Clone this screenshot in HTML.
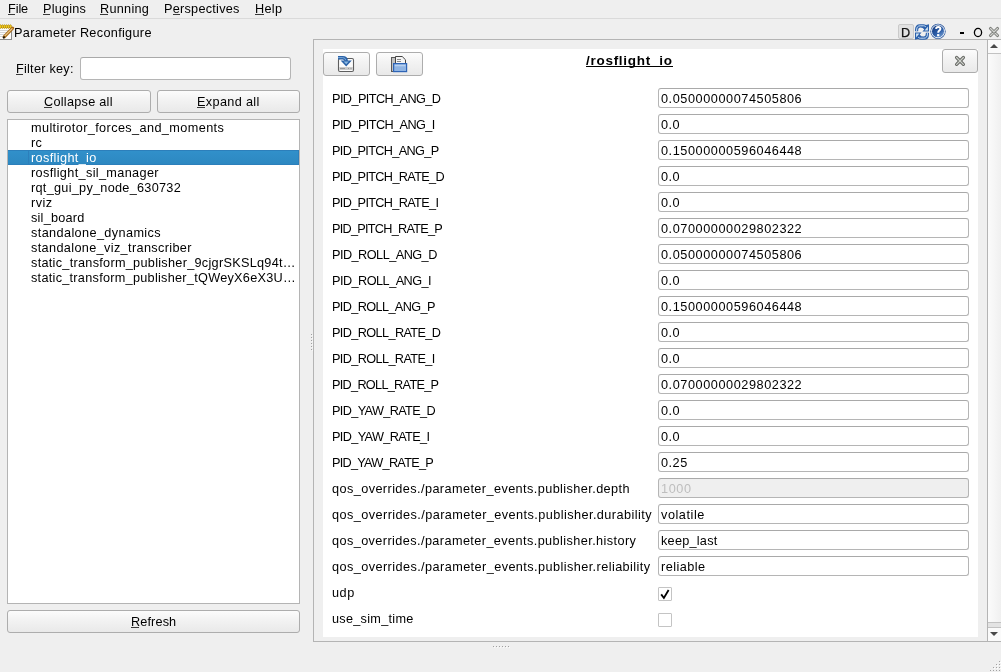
<!DOCTYPE html><html><head><meta charset="utf-8"><style>
*{box-sizing:border-box}
html,body{margin:0;padding:0}
body{width:1001px;height:672px;overflow:hidden;background:#efefef;position:relative;font-family:"Liberation Sans",sans-serif;font-size:12.7px}
.t{position:absolute;line-height:16px;white-space:pre}
.a{position:absolute}
u{text-decoration:none;border-bottom:1px solid currentColor;display:inline-block;line-height:12px}
.btn{position:absolute;border:1px solid #adadad;border-radius:3px;background:linear-gradient(#fcfcfc,#f3f3f3 40%,#e9e9e9)}
.inp{position:absolute;border:1px solid #b5b5b5;border-top-color:#a9a9a9;border-radius:3px;background:#fff}
</style></head><body><div id="root" class="a" style="left:0;top:0;width:1001px;height:672px;will-change:transform;background:#efefef">
<div class="a" style="left:0;top:18px;width:1001px;height:1px;background:#dadada"></div>
<div class="t" style="left:8px;top:1px;letter-spacing:-0.096px;color:#000;font-size:12.7px;">File</div><div class="a" style="left:8.00px;top:14px;width:6.91px;height:1px;background:#3a3a3a"></div>
<div class="t" style="left:43px;top:1px;letter-spacing:0.190px;color:#000;font-size:12.7px;">Plugins</div><div class="a" style="left:43.00px;top:14px;width:7.23px;height:1px;background:#3a3a3a"></div>
<div class="t" style="left:100px;top:1px;letter-spacing:0.271px;color:#000;font-size:12.7px;">Running</div><div class="a" style="left:100.00px;top:14px;width:8.34px;height:1px;background:#3a3a3a"></div>
<div class="t" style="left:164px;top:1px;letter-spacing:0.257px;color:#000;font-size:12.7px;">Perspectives</div><div class="a" style="left:172.73px;top:14px;width:7.39px;height:1px;background:#3a3a3a"></div>
<div class="t" style="left:255px;top:1px;letter-spacing:0.314px;color:#000;font-size:12.7px;">Help</div><div class="a" style="left:255.00px;top:14px;width:9.03px;height:1px;background:#3a3a3a"></div>
<div class="t" style="left:14px;top:25px;letter-spacing:0.314px;color:#000;font-size:12.7px;">Parameter Reconfigure</div>
<div class="t" style="left:16px;top:61px;letter-spacing:0.245px;color:#000;font-size:12.7px;">Filter key:</div><div class="a" style="left:16.00px;top:74px;width:6.91px;height:1px;background:#3a3a3a"></div>
<div class="inp" style="left:80px;top:57px;width:211px;height:23px"></div>
<div class="btn" style="left:7px;top:90px;width:144px;height:23px"></div>
<div class="t" style="left:44px;top:94px;letter-spacing:0.265px;color:#000;font-size:12.7px;">Collapse all</div><div class="a" style="left:44.00px;top:107px;width:8.38px;height:1px;background:#3a3a3a"></div>
<div class="btn" style="left:157px;top:90px;width:143px;height:23px"></div>
<div class="t" style="left:197px;top:94px;letter-spacing:0.343px;color:#000;font-size:12.7px;">Expand all</div><div class="a" style="left:197.00px;top:107px;width:7.58px;height:1px;background:#3a3a3a"></div>
<div class="a" style="left:7px;top:119px;width:293px;height:485px;background:#fff;border:1px solid #b4b4b4"></div>
<div class="t" style="left:31px;top:120px;letter-spacing:0.389px;color:#000;font-size:12.7px;">multirotor_forces_and_moments</div>
<div class="t" style="left:31px;top:135px;letter-spacing:0.343px;color:#000;font-size:12.7px;">rc</div>
<div class="a" style="left:8px;top:150px;width:291px;height:15px;background:linear-gradient(#3190ca,#2d88c1);border-top:1px solid #2c7fbb;border-bottom:1px solid #2c7fbb;border-right:1px solid #2c7fbb"></div>
<div class="a" style="left:28px;top:150px;width:1px;height:15px;background:#2c7fbb"></div>
<div class="t" style="left:31px;top:150px;letter-spacing:0.363px;color:#fff;font-size:12.7px;">rosflight_io</div>
<div class="t" style="left:31px;top:165px;letter-spacing:0.346px;color:#000;font-size:12.7px;">rosflight_sil_manager</div>
<div class="t" style="left:31px;top:180px;letter-spacing:0.278px;color:#000;font-size:12.7px;">rqt_gui_py_node_630732</div>
<div class="t" style="left:31px;top:195px;letter-spacing:0.480px;color:#000;font-size:12.7px;">rviz</div>
<div class="t" style="left:31px;top:210px;letter-spacing:0.229px;color:#000;font-size:12.7px;">sil_board</div>
<div class="t" style="left:31px;top:225px;letter-spacing:0.384px;color:#000;font-size:12.7px;">standalone_dynamics</div>
<div class="t" style="left:31px;top:240px;letter-spacing:0.354px;color:#000;font-size:12.7px;">standalone_viz_transcriber</div>
<div class="t" style="left:31px;top:255px;letter-spacing:0.283px;color:#000;font-size:12.7px;">static_transform_publisher_9cjgrSKSLq94t…</div>
<div class="t" style="left:31px;top:270px;letter-spacing:0.272px;color:#000;font-size:12.7px;">static_transform_publisher_tQWeyX6eX3U…</div>
<div class="btn" style="left:7px;top:610px;width:293px;height:23px"></div>
<div class="t" style="left:131px;top:614px;letter-spacing:0.125px;color:#000;font-size:12.7px;">Refresh</div><div class="a" style="left:131.00px;top:627px;width:8.34px;height:1px;background:#3a3a3a"></div>
<div class="a" style="left:312px;top:335px;width:1px;height:1px;background:#fafafa"></div>
<div class="a" style="left:311px;top:334px;width:1px;height:1px;background:#a0a0a0"></div>
<div class="a" style="left:494px;top:647px;width:1px;height:1px;background:#fafafa"></div>
<div class="a" style="left:493px;top:646px;width:1px;height:1px;background:#a0a0a0"></div>
<div class="a" style="left:312px;top:338px;width:1px;height:1px;background:#fafafa"></div>
<div class="a" style="left:311px;top:337px;width:1px;height:1px;background:#a0a0a0"></div>
<div class="a" style="left:497px;top:647px;width:1px;height:1px;background:#fafafa"></div>
<div class="a" style="left:496px;top:646px;width:1px;height:1px;background:#a0a0a0"></div>
<div class="a" style="left:312px;top:341px;width:1px;height:1px;background:#fafafa"></div>
<div class="a" style="left:311px;top:340px;width:1px;height:1px;background:#a0a0a0"></div>
<div class="a" style="left:500px;top:647px;width:1px;height:1px;background:#fafafa"></div>
<div class="a" style="left:499px;top:646px;width:1px;height:1px;background:#a0a0a0"></div>
<div class="a" style="left:312px;top:344px;width:1px;height:1px;background:#fafafa"></div>
<div class="a" style="left:311px;top:343px;width:1px;height:1px;background:#a0a0a0"></div>
<div class="a" style="left:503px;top:647px;width:1px;height:1px;background:#fafafa"></div>
<div class="a" style="left:502px;top:646px;width:1px;height:1px;background:#a0a0a0"></div>
<div class="a" style="left:312px;top:347px;width:1px;height:1px;background:#fafafa"></div>
<div class="a" style="left:311px;top:346px;width:1px;height:1px;background:#a0a0a0"></div>
<div class="a" style="left:506px;top:647px;width:1px;height:1px;background:#fafafa"></div>
<div class="a" style="left:505px;top:646px;width:1px;height:1px;background:#a0a0a0"></div>
<div class="a" style="left:312px;top:350px;width:1px;height:1px;background:#fafafa"></div>
<div class="a" style="left:311px;top:349px;width:1px;height:1px;background:#a0a0a0"></div>
<div class="a" style="left:509px;top:647px;width:1px;height:1px;background:#fafafa"></div>
<div class="a" style="left:508px;top:646px;width:1px;height:1px;background:#a0a0a0"></div>
<div class="a" style="left:313px;top:39px;width:688px;height:603px;border:1px solid #b4b4b4;border-right:none"></div>
<div class="a" style="left:323px;top:49px;width:655px;height:588px;background:#fff"></div>
<div class="btn" style="left:323px;top:52px;width:47px;height:24px"></div>
<div class="btn" style="left:376px;top:52px;width:47px;height:24px"></div>
<div class="btn" style="left:942px;top:49px;width:36px;height:24px"></div>
<div class="t" style="left:586px;top:53px;letter-spacing:0.719px;color:#000;font-size:13.5px;font-weight:bold;">/rosflight_io</div>
<div class="a" style="left:586px;top:66px;width:87px;height:1px;background:#000"></div>
<div class="t" style="left:332px;top:91px;letter-spacing:-0.574px;color:#000;font-size:12.7px;">PID_PITCH_ANG_D</div>
<div class="inp" style="left:658px;top:88px;width:311px;height:20px"></div>
<div class="t" style="left:661px;top:91px;letter-spacing:0.563px;color:#000;font-size:12.7px;">0.05000000074505806</div>
<div class="t" style="left:332px;top:117px;letter-spacing:-0.577px;color:#000;font-size:12.7px;">PID_PITCH_ANG_I</div>
<div class="inp" style="left:658px;top:114px;width:311px;height:20px"></div>
<div class="t" style="left:661px;top:117px;letter-spacing:0.480px;color:#000;font-size:12.7px;">0.0</div>
<div class="t" style="left:332px;top:143px;letter-spacing:-0.660px;color:#000;font-size:12.7px;">PID_PITCH_ANG_P</div>
<div class="inp" style="left:658px;top:140px;width:311px;height:20px"></div>
<div class="t" style="left:661px;top:143px;letter-spacing:0.563px;color:#000;font-size:12.7px;">0.15000000596046448</div>
<div class="t" style="left:332px;top:169px;letter-spacing:-0.654px;color:#000;font-size:12.7px;">PID_PITCH_RATE_D</div>
<div class="inp" style="left:658px;top:166px;width:311px;height:20px"></div>
<div class="t" style="left:661px;top:169px;letter-spacing:0.480px;color:#000;font-size:12.7px;">0.0</div>
<div class="t" style="left:332px;top:195px;letter-spacing:-0.657px;color:#000;font-size:12.7px;">PID_PITCH_RATE_I</div>
<div class="inp" style="left:658px;top:192px;width:311px;height:20px"></div>
<div class="t" style="left:661px;top:195px;letter-spacing:0.480px;color:#000;font-size:12.7px;">0.0</div>
<div class="t" style="left:332px;top:221px;letter-spacing:-0.735px;color:#000;font-size:12.7px;">PID_PITCH_RATE_P</div>
<div class="inp" style="left:658px;top:218px;width:311px;height:20px"></div>
<div class="t" style="left:661px;top:221px;letter-spacing:0.563px;color:#000;font-size:12.7px;">0.07000000029802322</div>
<div class="t" style="left:332px;top:247px;letter-spacing:-0.523px;color:#000;font-size:12.7px;">PID_ROLL_ANG_D</div>
<div class="inp" style="left:658px;top:244px;width:311px;height:20px"></div>
<div class="t" style="left:661px;top:247px;letter-spacing:0.563px;color:#000;font-size:12.7px;">0.05000000074505806</div>
<div class="t" style="left:332px;top:273px;letter-spacing:-0.526px;color:#000;font-size:12.7px;">PID_ROLL_ANG_I</div>
<div class="inp" style="left:658px;top:270px;width:311px;height:20px"></div>
<div class="t" style="left:661px;top:273px;letter-spacing:0.480px;color:#000;font-size:12.7px;">0.0</div>
<div class="t" style="left:332px;top:299px;letter-spacing:-0.616px;color:#000;font-size:12.7px;">PID_ROLL_ANG_P</div>
<div class="inp" style="left:658px;top:296px;width:311px;height:20px"></div>
<div class="t" style="left:661px;top:299px;letter-spacing:0.563px;color:#000;font-size:12.7px;">0.15000000596046448</div>
<div class="t" style="left:332px;top:325px;letter-spacing:-0.612px;color:#000;font-size:12.7px;">PID_ROLL_RATE_D</div>
<div class="inp" style="left:658px;top:322px;width:311px;height:20px"></div>
<div class="t" style="left:661px;top:325px;letter-spacing:0.480px;color:#000;font-size:12.7px;">0.0</div>
<div class="t" style="left:332px;top:351px;letter-spacing:-0.615px;color:#000;font-size:12.7px;">PID_ROLL_RATE_I</div>
<div class="inp" style="left:658px;top:348px;width:311px;height:20px"></div>
<div class="t" style="left:661px;top:351px;letter-spacing:0.480px;color:#000;font-size:12.7px;">0.0</div>
<div class="t" style="left:332px;top:377px;letter-spacing:-0.699px;color:#000;font-size:12.7px;">PID_ROLL_RATE_P</div>
<div class="inp" style="left:658px;top:374px;width:311px;height:20px"></div>
<div class="t" style="left:661px;top:377px;letter-spacing:0.563px;color:#000;font-size:12.7px;">0.07000000029802322</div>
<div class="t" style="left:332px;top:403px;letter-spacing:-0.636px;color:#000;font-size:12.7px;">PID_YAW_RATE_D</div>
<div class="inp" style="left:658px;top:400px;width:311px;height:20px"></div>
<div class="t" style="left:661px;top:403px;letter-spacing:0.480px;color:#000;font-size:12.7px;">0.0</div>
<div class="t" style="left:332px;top:429px;letter-spacing:-0.639px;color:#000;font-size:12.7px;">PID_YAW_RATE_I</div>
<div class="inp" style="left:658px;top:426px;width:311px;height:20px"></div>
<div class="t" style="left:661px;top:429px;letter-spacing:0.480px;color:#000;font-size:12.7px;">0.0</div>
<div class="t" style="left:332px;top:455px;letter-spacing:-0.728px;color:#000;font-size:12.7px;">PID_YAW_RATE_P</div>
<div class="inp" style="left:658px;top:452px;width:311px;height:20px"></div>
<div class="t" style="left:661px;top:455px;letter-spacing:0.505px;color:#000;font-size:12.7px;">0.25</div>
<div class="t" style="left:332px;top:481px;letter-spacing:0.412px;color:#000;font-size:12.7px;">qos_overrides./parameter_events.publisher.depth</div>
<div class="inp" style="left:658px;top:478px;width:311px;height:20px;background:#efefef"></div>
<div class="t" style="left:661px;top:481px;letter-spacing:0.578px;color:#bebebe;font-size:12.7px;">1000</div>
<div class="t" style="left:332px;top:507px;letter-spacing:0.429px;color:#000;font-size:12.7px;">qos_overrides./parameter_events.publisher.durability</div>
<div class="inp" style="left:658px;top:504px;width:311px;height:20px"></div>
<div class="t" style="left:661px;top:507px;letter-spacing:0.545px;color:#000;font-size:12.7px;">volatile</div>
<div class="t" style="left:332px;top:533px;letter-spacing:0.410px;color:#000;font-size:12.7px;">qos_overrides./parameter_events.publisher.history</div>
<div class="inp" style="left:658px;top:530px;width:311px;height:20px"></div>
<div class="t" style="left:661px;top:533px;letter-spacing:0.246px;color:#000;font-size:12.7px;">keep_last</div>
<div class="t" style="left:332px;top:559px;letter-spacing:0.421px;color:#000;font-size:12.7px;">qos_overrides./parameter_events.publisher.reliability</div>
<div class="inp" style="left:658px;top:556px;width:311px;height:20px"></div>
<div class="t" style="left:661px;top:559px;letter-spacing:0.435px;color:#000;font-size:12.7px;">reliable</div>
<div class="t" style="left:332px;top:585px;letter-spacing:0.557px;color:#000;font-size:12.7px;">udp</div>
<div class="a" style="left:658px;top:587px;width:14px;height:14px;border:1px solid #c4c4c4;border-radius:1px;background:#fff"></div>
<svg class="a" style="left:658px;top:587px" width="14" height="14"><path d="M3.2 7.4 L5.9 11 L10.6 3" fill="none" stroke="#000" stroke-width="1.8" stroke-linejoin="miter"/></svg>
<div class="t" style="left:332px;top:611px;letter-spacing:0.274px;color:#000;font-size:12.7px;">use_sim_time</div>
<div class="a" style="left:658px;top:613px;width:14px;height:14px;border:1px solid #c4c4c4;border-radius:1px;background:#fff"></div>
<div class="a" style="left:987px;top:40px;width:14px;height:601px;border-left:1px solid #b4b4b4;background:#fafafa"></div>

<!-- notepad icon -->
<svg class="a" style="left:0;top:23px" width="15" height="18" viewBox="0 0 15 18">
 <rect x="-1.5" y="4.5" width="13" height="12" fill="#fdfdfd" stroke="#8c8c8c"/>
 <path d="M0 7.5H8M0 9.5H7M0 11.5H6M0 13.5H5" stroke="#d4d4d4"/>
 <g fill="#f2cc22" stroke="#a88000" stroke-width="0.6"><ellipse cx="0.5" cy="3.6" rx="1" ry="1.9"/><ellipse cx="2.5" cy="3.6" rx="1" ry="1.9"/><ellipse cx="4.5" cy="3.6" rx="1" ry="1.9"/><ellipse cx="6.5" cy="3.6" rx="1" ry="1.9"/><ellipse cx="8.5" cy="3.6" rx="1" ry="1.9"/><ellipse cx="10.5" cy="3.6" rx="1" ry="1.9"/></g>
 <path d="M4.2 13.8L12.6 5.2" stroke="#a86a18" stroke-width="3.2" stroke-linecap="round"/>
 <path d="M4.6 13.2L12.4 5.4" stroke="#f0cc88" stroke-width="1.2"/>
 <path d="M3.2 15.2L4.6 13.4" stroke="#111" stroke-width="1.6"/>
</svg>
<!-- load icon -->
<svg class="a" style="left:337px;top:55px" width="18" height="18" viewBox="0 0 18 18">
 <rect x="1.5" y="3.5" width="15" height="13" rx="1.5" fill="#fbfbfb" stroke="#5e5e5e" stroke-width="1.1"/>
 <rect x="2.2" y="12" width="13.6" height="3" fill="#cbcbcb"/>
 <path d="M3 13.5H8M11 13.5H12M13.5 13.5H14.5" stroke="#9a9a9a" stroke-width="1"/>
 <path d="M1 2.8H5.6Q9.2 2.8 9.2 6.2V7" fill="none" stroke="#2a62a8" stroke-width="3.4"/>
 <path d="M1 2.6H5.8Q8.4 2.6 8.8 5.4" fill="none" stroke="#86b2de" stroke-width="0.9"/>
 <polygon points="3.6,5.6 14.8,5.6 9.2,11.4" fill="#2a62a8"/>
 <polygon points="6.6,6.6 11.8,6.6 9.2,9.2" fill="#8ab8e2"/>
</svg>
<!-- open icon -->
<svg class="a" style="left:390px;top:55px" width="18" height="18" viewBox="0 0 18 18">
 <rect x="1.5" y="2.5" width="4" height="14" fill="#c2c2c2" stroke="#5a5a5a"/>
 <path d="M5.5 1.5H12.2L15.5 4.8V9H5.5Z" fill="#f5f5f5" stroke="#454545"/>
 <path d="M7 4.5H11M7 6.5H11" stroke="#8a8a8a"/>
 <rect x="3.6" y="8.6" width="13" height="8" fill="#8fb4e3" stroke="#2e64b6" stroke-width="1.2"/>
 <rect x="4.8" y="9.8" width="10.6" height="1.5" fill="#b8d0f0"/>
</svg>
<!-- close X button -->
<svg class="a" style="left:953px;top:54px" width="14" height="14" viewBox="0 0 14 14">
 <path d="M3.6 3.5L10.4 10.3M10.4 3.5L3.6 10.3" stroke="#666864" stroke-width="3.2" stroke-linecap="round"/>
 <path d="M3.6 3.5L10.4 10.3M10.4 3.5L3.6 10.3" stroke="#cfd2cc" stroke-width="1.2" stroke-linecap="round"/>
</svg>
<!-- D button -->
<div class="a" style="left:898px;top:24px;width:16px;height:15px;border:1px solid #cacaca;border-radius:2px;background:#e2e2e2"></div>
<div class="t" style="left:901px;top:25px;font-size:12.7px;color:#111;-webkit-text-stroke:0.25px #111">D</div>
<!-- refresh icon -->
<svg class="a" style="left:914px;top:23px" width="17" height="18" viewBox="0 0 17 18">
 <g id="rh">
 <path d="M1 8.2V6.8Q1 1.2 6 1.2H9.5Q11 1.2 12 2L15 1.3V8.6H8.4L10.3 6.6Q9 4.4 6.5 4.4Q4.2 4.4 4.2 7V8.2Z" fill="#2b60ab"/>
 <path d="M2.6 8V7Q2.6 2.8 6.2 2.8H9.6Q10.8 2.8 11.8 3.8" fill="none" stroke="#c8ddf2" stroke-width="1"/>
 <polygon points="13.9,3.6 13.9,7.6 10.6,7.6" fill="#d4e6f6"/>
 </g>
 <use href="#rh" transform="rotate(180 8 9)"/>
</svg>
<!-- help icon -->
<svg class="a" style="left:929px;top:22px" width="18" height="19" viewBox="0 0 18 19">
 <defs><linearGradient id="hg" x1="0.2" y1="0.1" x2="0.85" y2="0.95"><stop offset="0" stop-color="#163f85"/><stop offset="0.55" stop-color="#2d5ea8"/><stop offset="1" stop-color="#7ea5d6"/></linearGradient></defs>
 <circle cx="9" cy="9.4" r="7.6" fill="#1d4b96"/>
 <circle cx="9" cy="9.4" r="6.5" fill="url(#hg)" stroke="#f4f8fc" stroke-width="1"/>
 <path d="M7 6.9Q7.2 4.9 9.3 4.9Q11.4 4.9 11.4 6.8Q11.4 7.9 10.2 8.6Q9.2 9.2 9.2 10.8" fill="none" stroke="#fff" stroke-width="2"/>
 <rect x="8.1" y="12.1" width="2.2" height="2.1" fill="#fff"/>
</svg>
<!-- dock title buttons -->
<div class="a" style="left:960px;top:32px;width:4px;height:2px;background:#000"></div>
<svg class="a" style="left:973px;top:27px" width="11" height="11" viewBox="0 0 11 11">
 <ellipse cx="5" cy="5.5" rx="3.6" ry="4.1" fill="none" stroke="#000" stroke-width="1.3"/>
</svg>
<svg class="a" style="left:987px;top:25px" width="14" height="14" viewBox="0 0 14 14">
 <path d="M3.5 3.5L10.5 10.5M10.5 3.5L3.5 10.5" stroke="#7c7e7a" stroke-width="3.1" stroke-linecap="round"/>
 <path d="M3.5 3.5L10.5 10.5M10.5 3.5L3.5 10.5" stroke="#d2d4d0" stroke-width="1.1" stroke-linecap="round"/>
</svg>
<!-- scrollbar -->
<div class="a" style="left:988px;top:40px;width:13px;height:13px;background:#fafafa"></div>
<div class="a" style="left:988px;top:53px;width:13px;height:1px;background:#c2c2c2"></div>
<div class="a" style="left:988px;top:54px;width:13px;height:568px;background:linear-gradient(90deg,#fbfbfb,#f0f0f0)"></div>
<div class="a" style="left:988px;top:622px;width:13px;height:1px;background:#c2c2c2"></div>
<div class="a" style="left:988px;top:623px;width:13px;height:4px;background:#e3e3e3"></div>
<div class="a" style="left:988px;top:627px;width:13px;height:1px;background:#c2c2c2"></div>
<div class="a" style="left:988px;top:628px;width:13px;height:13px;background:#fafafa"></div>
<svg class="a" style="left:988px;top:40px" width="13" height="601">
 <polygon points="2,8 10,8 6,4" fill="#4a4a4a"/>
 <polygon points="2,592 10,592 6,596" fill="#4a4a4a"/>
</svg>
<!-- size grip -->
<svg class="a" style="left:985px;top:655px" width="16" height="17">
 <g fill="#fff">
  <rect x="15" y="7" width="1" height="1"/>
  <rect x="12" y="10" width="1" height="1"/><rect x="15" y="10" width="1" height="1"/>
  <rect x="9" y="13" width="1" height="1"/><rect x="12" y="13" width="1" height="1"/><rect x="15" y="13" width="1" height="1"/>
 </g>
 <g fill="#a2a2a2">
  <rect x="14" y="6" width="1" height="1"/>
  <rect x="11" y="9" width="1" height="1"/><rect x="14" y="9" width="1" height="1"/>
  <rect x="8" y="12" width="1" height="1"/><rect x="11" y="12" width="1" height="1"/><rect x="14" y="12" width="1" height="1"/>
  <rect x="5" y="15" width="1" height="1"/><rect x="8" y="15" width="1" height="1"/><rect x="11" y="15" width="1" height="1"/><rect x="14" y="15" width="1" height="1"/>
 </g>
</svg>

</div></body></html>
